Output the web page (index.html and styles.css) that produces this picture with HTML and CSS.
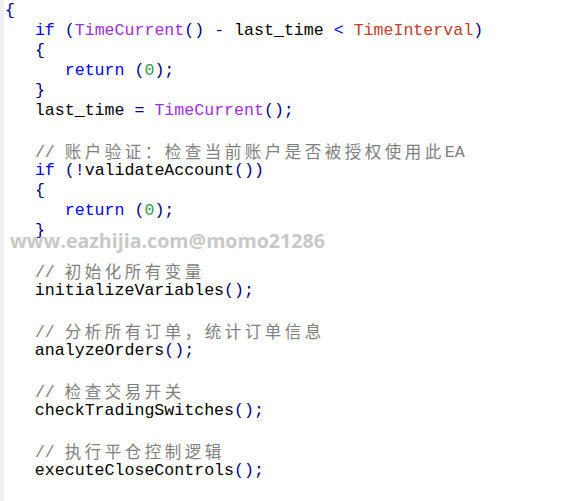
FILE: index.html
```html
<!DOCTYPE html>
<html>
<head>
<meta charset="utf-8">
<link rel="stylesheet" href="styles.css">
</head>
<body>
<div class="editor">
  <div class="gutter"></div>
  <div class="code">
    <div class="ln"><span class="p">{</span></div>
    <div class="ln">   <span class="k">if</span> <span class="p">(</span><span class="f">TimeCurrent</span><span class="p">()</span> <span class="p">-</span> last_time <span class="o">&lt;</span> <span class="v">TimeInterval</span><span class="p">)</span></div>
    <div class="ln">   <span class="p">{</span></div>
    <div class="ln">      <span class="k">return</span> <span class="p">(</span><span class="n">0</span><span class="p">);</span></div>
    <div class="ln">   <span class="p">}</span></div>
    <div class="ln">   last_time <span class="p">=</span> <span class="f">TimeCurrent</span><span class="p">();</span></div>
    <div class="ln"></div>
    <div class="ln">   <span class="c">// <span class="cjk">账户验证：检查当前账户是否被授权使用此</span>EA</span></div>
    <div class="ln">   <span class="k">if</span> <span class="p">(!</span>validateAccount<span class="p">())</span></div>
    <div class="ln">   <span class="p">{</span></div>
    <div class="ln">      <span class="k">return</span> <span class="p">(</span><span class="n">0</span><span class="p">);</span></div>
    <div class="ln">   <span class="p">}</span></div>
    <div class="ln"></div>
    <div class="ln">   <span class="c">// <span class="cjk">初始化所有变量</span></span></div>
    <div class="ln">   initializeVariables<span class="p">();</span></div>
    <div class="ln"></div>
    <div class="ln">   <span class="c">// <span class="cjk">分析所有订单，统计订单信息</span></span></div>
    <div class="ln">   analyzeOrders<span class="p">();</span></div>
    <div class="ln"></div>
    <div class="ln">   <span class="c">// <span class="cjk">检查交易开关</span></span></div>
    <div class="ln">   checkTradingSwitches<span class="p">();</span></div>
    <div class="ln"></div>
    <div class="ln">   <span class="c">// <span class="cjk">执行平仓控制逻辑</span></span></div>
    <div class="ln">   executeCloseControls<span class="p">();</span></div>
    <div class="ln"></div>
    <div class="ln">   <span class="c">// <span class="cjk">执行开仓控制逻辑</span></span></div>
  </div>
  <div class="watermark">www.eazhijia.com@momo21286</div>
</div>
</body>
</html>
```

FILE: styles.css
```css
html, body {
  margin: 0;
  padding: 0;
  background: #ffffff;
  overflow: hidden;
}
.editor {
  position: relative;
  display: flex;
  width: 565px;
  height: 501px;
  overflow: hidden;
}
.gutter {
  width: 4px;
  flex: 0 0 4px;
  background: #f0f0f0;
}
.code {
  margin-top: 1px;
  padding-left: 1px;
  font-family: "Liberation Mono", "Courier New", monospace;
  font-size: 16.6px;
  color: #000000;
}
.ln {
  height: 20px;
  line-height: 20px;
  white-space: pre;
}
.k { color: #0000ff; }
.p { color: #000080; }
.o { color: #0000ff; }
.f { color: #a030d8; }
.v { color: #c0402a; }
.n { color: #3a9a50; }
.c { color: #808080; }
.cjk {
  font-family: "Noto Sans CJK SC", sans-serif;
  font-size: 16.5px;
  letter-spacing: 3.5px;
  vertical-align: -1px;
}
.watermark {
  position: absolute;
  left: 10px;
  top: 227px;
  font-family: "Open Sans", sans-serif;
  font-weight: 700;
  font-size: 19.6px;
  line-height: 27px;
  color: #c8c8c8;
  white-space: nowrap;
}
```
